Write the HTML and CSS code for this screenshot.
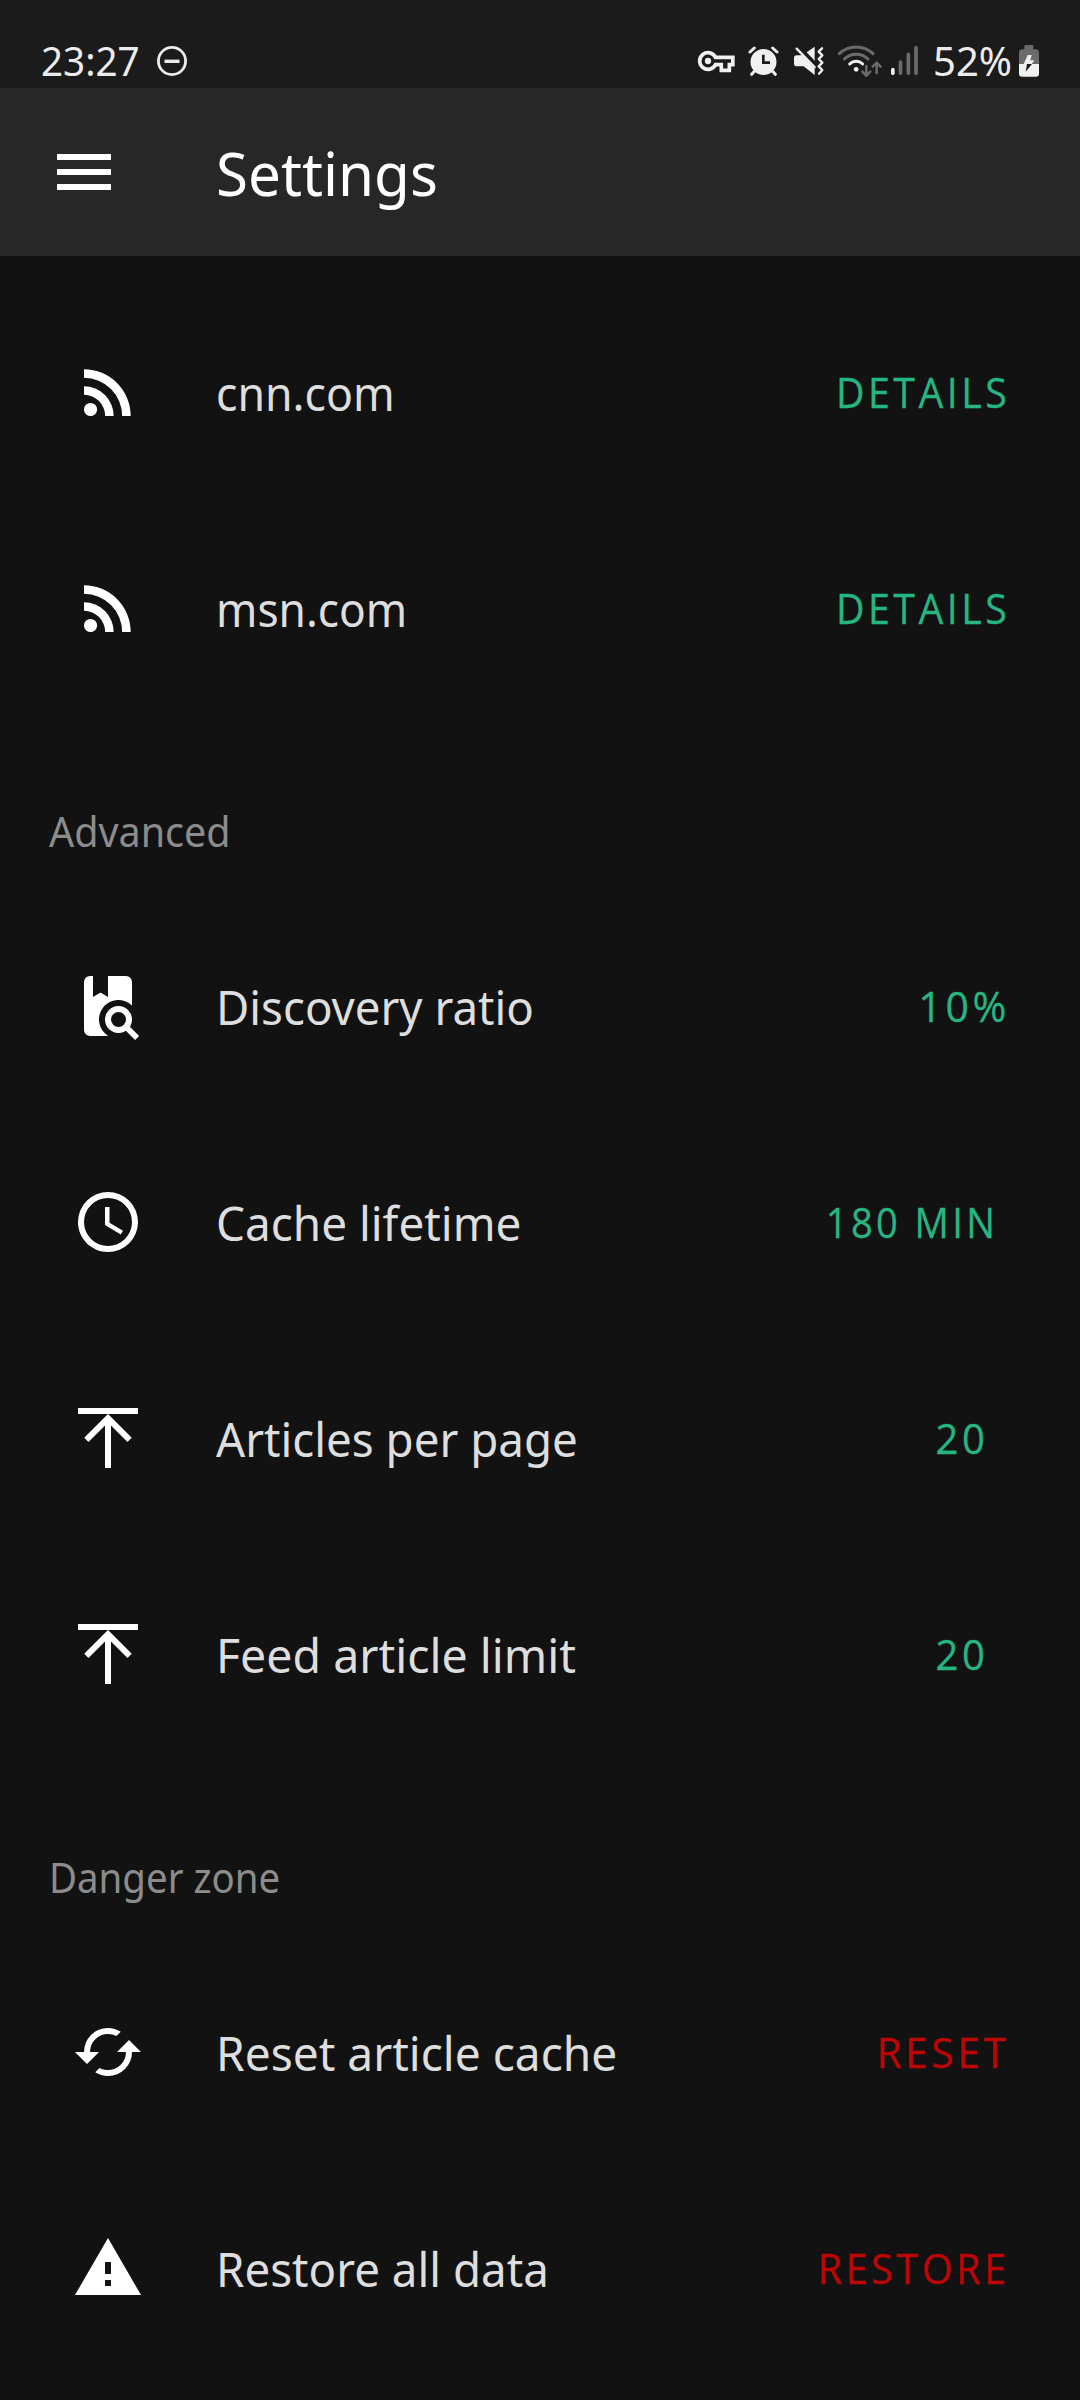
FILE: index.html
```html
<!DOCTYPE html>
<html lang="en">
<head>
<meta charset="utf-8">
<title>Settings</title>
<link rel="stylesheet" href="styles.css">
</head>
<body>
<div class="status">
  <span class="clock"><span class="fit fit-clock">23:27</span></span>
  <svg class="dnd" viewBox="0 0 32 32"><circle cx="16" cy="16" r="13.6" fill="none" stroke="#ececec" stroke-width="2.8"/><path d="M8.5 16.3h15" stroke="#ececec" stroke-width="3.4"/></svg>
  <div class="tray">
    <svg width="50" height="58" viewBox="45 0 150 174"><path fill="none" stroke="#f0f0f0" stroke-width="11" d="M106.500 82A25 25 0 1 0 106.500 104H124V121H148V104H158.500V82H106.500Z" stroke-linejoin="miter"/><circle cx="84" cy="93" r="9.500" fill="#f0f0f0"/><path d="M133 99V110" stroke="#1b1b1b" stroke-width="6"/></svg>
    <svg width="45" height="58" viewBox="195 0 135 174"><circle cx="250.500" cy="96" r="39" fill="#f0f0f0"/><path d="M223 54l-13 12M278 54l13 12M222 125l-7 8M279 125l7 8" stroke="#f0f0f0" stroke-width="9" stroke-linecap="round"/><path d="M250 74v24h20" fill="none" stroke="#1b1b1b" stroke-width="8"/></svg>
    <svg width="43" height="58" viewBox="330 0 129 174"><path fill="#f0f0f0" d="M350 76H366L404 116V135L371 109H349Q342 109 342 102V84Q342 76 350 76ZM380 67L404 50V92Z"/><path d="M350 56L404 112" stroke="#f0f0f0" stroke-width="7" stroke-linecap="round"/><path d="M426 55L416 65 427 76 416 87 427 98 416 109 427 120 417 131" fill="none" stroke="#f0f0f0" stroke-width="7" stroke-linecap="round" stroke-linejoin="round"/></svg>
    <svg width="52" height="58" viewBox="459 0 156 174"><g fill="none" stroke-width="9" stroke-linecap="round"><path d="M478 71A73 73 0 0 1 579 71M493 87A51 51 0 0 1 564 87" stroke="#6b6b6b"/><path d="M509 102A28 28 0 0 1 548 102" stroke="#f0f0f0"/><path d="M559 108V136M547 125l12 12 12-12M590 129V99M578 110l12-12 12 12" stroke="#6b6b6b" stroke-width="7.500"/></g><circle cx="528.500" cy="118" r="7" fill="#f0f0f0"/></svg>
    <svg width="40" height="58" viewBox="615 0 120 174"><g stroke-width="11" stroke-linecap="round"><path d="M638.500 119v11" stroke="#f0f0f0"/><path d="M661.500 96v34M685 73v57M708 53v77" stroke="#6b6b6b"/></g></svg>
    <span class="percent"><span class="fit fit-percent">52%</span></span>
    <svg width="24" height="58" viewBox="1008 0 72 174"><path fill="#6b6b6b" d="M1017 102V68Q1017 58 1027 58H1033V49Q1033 45 1037 45H1056Q1060 45 1060 49V58H1067Q1077 58 1077 68V102Z"/><path fill="#f0f0f0" d="M1017 102H1077V131Q1077 140 1068 140H1026Q1017 140 1017 131Z"/><path fill="#f0f0f0" d="M1043 75H1055L1051 91H1063L1055 102H1031Z"/><path fill="#1b1b1b" d="M1041 102H1056L1037 125Z"/></svg>
  </div>
</div>
<header class="appbar">
  <svg class="icon" viewBox="0 0 24 24"><path d="M3 6h18v2H3zM3 11h18v2H3zM3 16h18v2H3z"/></svg>
  <h1 class="title"><span class="fit fit-title">Settings</span></h1>
</header>
<main class="list">
  <div class="row cnn">
    <svg class="icon" viewBox="0 0 24 24"><path d="M6.180 15.640A2.180 2.180 0 0 1 8.360 17.820C8.360 19 7.380 20 6.180 20C5 20 4 19 4 17.820A2.180 2.180 0 0 1 6.180 15.640M4 4.440A15.560 15.560 0 0 1 19.560 20H16.730A12.730 12.730 0 0 0 4 7.270V4.440M4 10.100A9.900 9.900 0 0 1 13.900 20H11.070A7.070 7.070 0 0 0 4 12.930V10.100Z"/></svg>
    <span class="label"><span class="fit">cnn.com</span></span>
    <span class="action">DETAILS</span>
  </div>
  <div class="row msn">
    <svg class="icon" viewBox="0 0 24 24"><path d="M6.180 15.640A2.180 2.180 0 0 1 8.360 17.820C8.360 19 7.380 20 6.180 20C5 20 4 19 4 17.820A2.180 2.180 0 0 1 6.180 15.640M4 4.440A15.560 15.560 0 0 1 19.560 20H16.730A12.730 12.730 0 0 0 4 7.270V4.440M4 10.100A9.900 9.900 0 0 1 13.900 20H11.070A7.070 7.070 0 0 0 4 12.930V10.100Z"/></svg>
    <span class="label"><span class="fit">msn.com</span></span>
    <span class="action">DETAILS</span>
  </div>
  <h2 class="section advanced"><span class="fit">Advanced</span></h2>
  <div class="row discovery">
    <svg class="icon" viewBox="0 0 24 24"><path d="M6 2H7V9L9.500 7.500L12 9V2H18A2 2 0 0 1 20 4V11.810A6.500 6.500 0 1 0 12.040 22H6A2 2 0 0 1 4 20V4A2 2 0 0 1 6 2Z"/><circle cx="15.500" cy="16.500" r="3.500" fill="none" stroke="#fff" stroke-width="2"/><path d="M18.200 19.200L21.700 22.700" stroke="#fff" stroke-width="1.900"/></svg>
    <span class="label"><span class="fit">Discovery ratio</span></span>
    <span class="action">10%</span>
  </div>
  <div class="row cache">
    <svg class="icon" viewBox="0 0 24 24"><path d="M12 20A8 8 0 0 0 20 12A8 8 0 0 0 12 4A8 8 0 0 0 4 12A8 8 0 0 0 12 20M12 2A10 10 0 0 1 22 12A10 10 0 0 1 12 22C6.470 22 2 17.500 2 12A10 10 0 0 1 12 2M12.500 7V12.250L17 14.920L16.250 16.150L11 13V7H12.500Z"/></svg>
    <span class="label"><span class="fit">Cache lifetime</span></span>
    <span class="action">180 MIN</span>
  </div>
  <div class="row articles">
    <svg class="icon" viewBox="0 0 24 24"><path d="M4.080 11.920L12 4L19.920 11.920L18.500 13.330L13 7.830V22H11V7.830L5.500 13.330L4.080 11.920M12 4H22V2H2V4H12Z"/></svg>
    <span class="label"><span class="fit">Articles per page</span></span>
    <span class="action">20</span>
  </div>
  <div class="row feed">
    <svg class="icon" viewBox="0 0 24 24"><path d="M4.080 11.920L12 4L19.920 11.920L18.500 13.330L13 7.830V22H11V7.830L5.500 13.330L4.080 11.920M12 4H22V2H2V4H12Z"/></svg>
    <span class="label"><span class="fit">Feed article limit</span></span>
    <span class="action">20</span>
  </div>
  <h2 class="section danger"><span class="fit">Danger zone</span></h2>
  <div class="row reset">
    <svg class="icon" viewBox="0 0 24 24"><path d="M19 8L15 12H18A6 6 0 0 1 12 18C11 18 10.030 17.750 9.200 17.300L7.740 18.760C8.970 19.540 10.430 20 12 20A8 8 0 0 0 20 12H23M6 12A6 6 0 0 1 12 6C13 6 13.970 6.250 14.800 6.700L16.260 5.240C15.030 4.460 13.570 4 12 4A8 8 0 0 0 4 12H1L5 16L9 12"/></svg>
    <span class="label"><span class="fit">Reset article cache</span></span>
    <span class="action">RESET</span>
  </div>
  <div class="row restore">
    <svg class="icon" viewBox="0 0 24 24"><path d="M13 14H11V10H13M13 18H11V16H13M1 21H23L12 2L1 21Z"/></svg>
    <span class="label"><span class="fit">Restore all data</span></span>
    <span class="action">RESTORE</span>
  </div>
</main>
</body>
</html>
```
FILE: styles.css
```css
* { box-sizing: border-box; }
body {
  margin: 0;
  height: 2400px;
  overflow: hidden;
  background: #121212;
  color: #dedede;
  font-family: "Noto Sans", "Open Sans", sans-serif;
}
svg { display: block; flex: none; }

/* Condenses a run of text horizontally; each user sets its own factor */
.fit {
  display: inline-block;
  white-space: nowrap;
  transform: scaleX(var(--fit, 1));
  transform-origin: left center;
}

.status {
  display: flex;
  height: 88px;
  background: #1b1b1b;
  color: #ececec;
  font-size: 40px;
  line-height: 54px;
}
.clock { width: 156px; padding: 34px 0 0 41px; }
.fit-clock { --fit: .965; }
.dnd { width: 32px; height: 32px; margin-top: 45px; }
.tray { display: flex; margin-left: auto; margin-right: 40px; align-items: flex-end; }
.percent { width: 91px; height: 54px; padding-left: 8px; }
.fit-percent { --fit: 1; }

.appbar {
  display: flex;
  align-items: center;
  height: 168px;
  padding-left: 48px;
  gap: 96px;
  background: #272727;
  color: #fff;
}
.title { margin: 0; font-size: 60px; font-weight: 400; line-height: 80px; padding-top: 1px; }
.fit-title { --fit: .972; }

.icon { width: 72px; height: 72px; fill: #fff; }

.list { padding-top: 28px; }
.row {
  display: flex;
  align-items: center;
  height: 216px;
  padding: 0 70px 0 72px;
}
.label {
  flex: 1;
  margin-left: 72px;
  padding-top: 2px;
  font-size: 48px;
  line-height: 64px;
}
.action {
  flex: none;
  margin-top: -1px;
  font-family: "Open Sans", "Noto Sans", sans-serif;
  font-size: 42px;
  line-height: 56px;
  letter-spacing: 3.750px;
  color: #26b683;
  -webkit-text-stroke: .3px currentColor;
  white-space: nowrap;
  transform: scaleX(var(--action-fit, 1));
  transform-origin: right center;
}
.section {
  height: 182px;
  margin: 0;
  padding: 86px 0 0 49px;
  font-size: 42px;
  font-weight: 400;
  line-height: 58px;
  color: #8c8c8c;
}

.cnn { --fit: .93; --action-fit: .936; }
.msn { --fit: .922; --action-fit: .936; }
.advanced { --fit: .94; }
.discovery { --fit: .951; --action-fit: .975; }
.cache { --fit: .956; --action-fit: .907; padding-right: 82px; }
.articles { --fit: .952; --action-fit: .955; padding-right: 91px; }
.feed { --fit: .968; --action-fit: .955; padding-right: 91px; }
.danger { --fit: .915; }
.reset { --fit: .96; --action-fit: .968; }
.restore { --fit: .952; --action-fit: .944; }
.reset .action, .restore .action { color: #bd0505; }
```
